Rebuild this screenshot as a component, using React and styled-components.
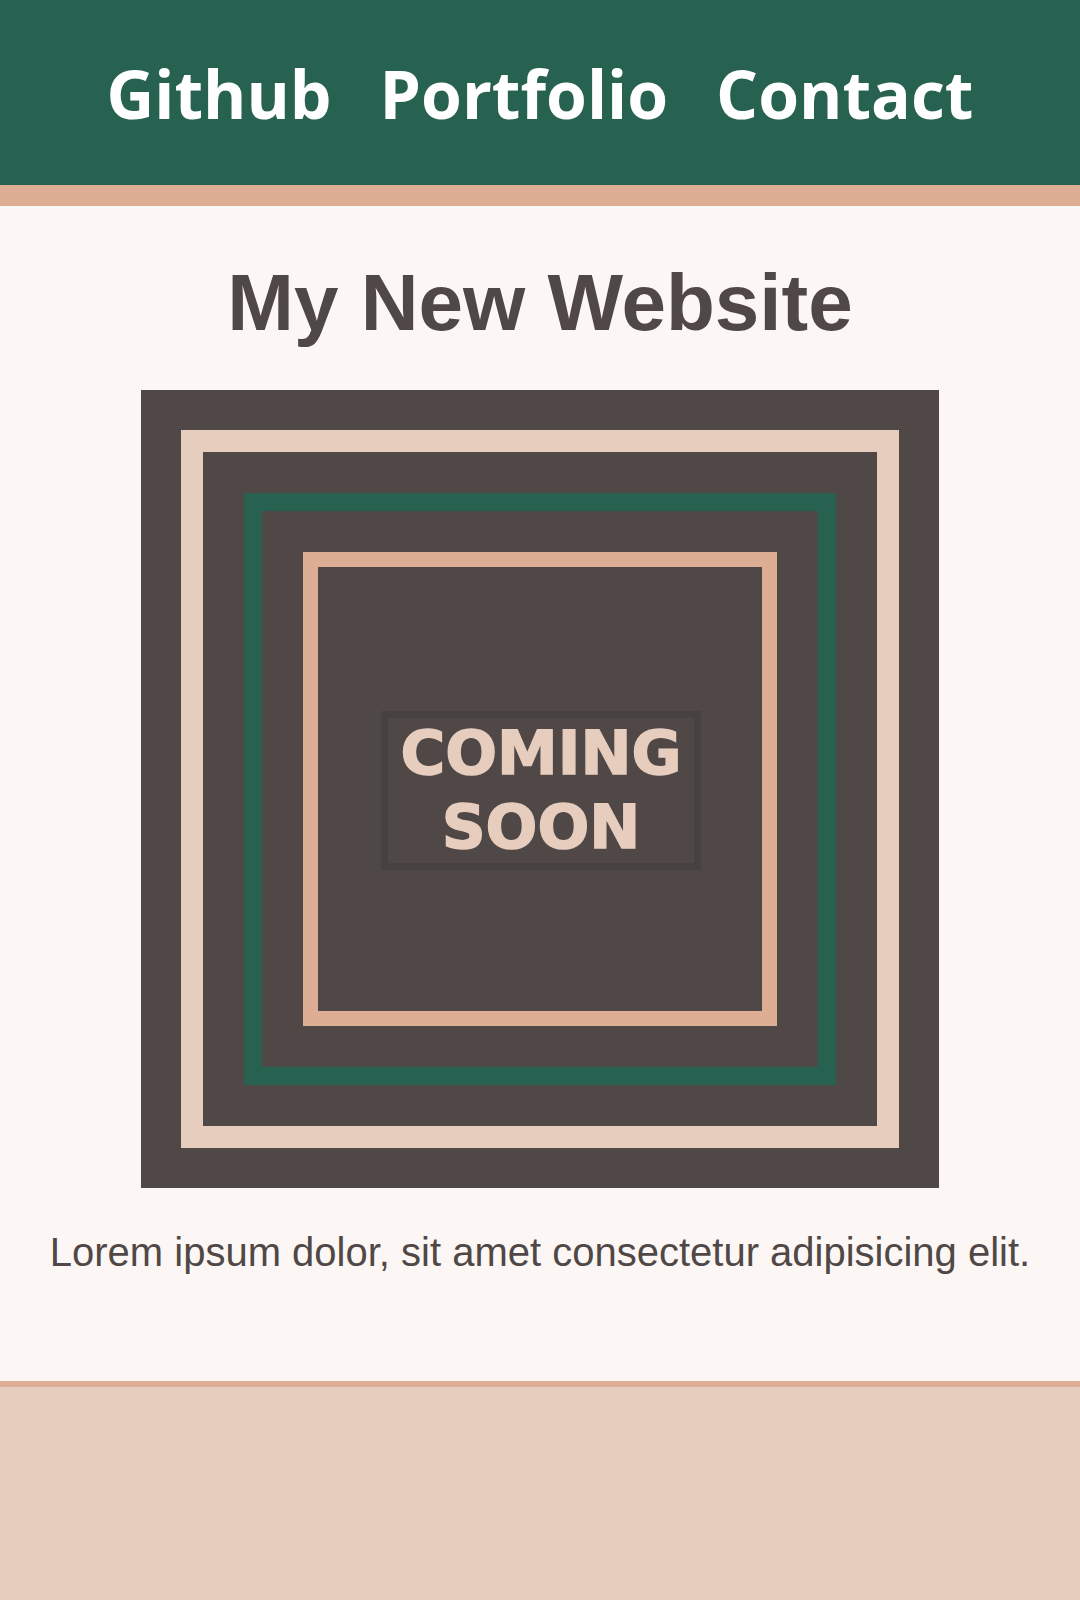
import React from "react";
import styled, { createGlobalStyle } from "styled-components";

const Global = createGlobalStyle`
  html, body { margin: 0; padding: 0; }
  body { background: #e7cdbe; font-family: "Liberation Sans", Arial, sans-serif; }
  * { box-sizing: border-box; }
`;

const Header = styled.header`
  height: 206px;
  background: #27614f;
  border-bottom: 21px solid #ddae94;
  display: flex;
  align-items: center;
  justify-content: center;
`;

const Nav = styled.nav`
  display: flex;
  gap: 48px;
  align-items: center;
  justify-content: center;
`;

const NavLink = styled.a`
  color: #ffffff;
  text-decoration: none;
  font-family: "Open Sans", "Noto Sans", sans-serif;
  font-weight: 700;
  font-size: 66px;
  line-height: 1;
`;

const Main = styled.main`
  background: #fcf7f4;
  display: flex;
  flex-direction: column;
  align-items: center;
  padding: 51px 0 106px;
`;

const Title = styled.h1`
  margin: 0 0 41px;
  color: #504846;
  font-family: "Liberation Sans", Arial, sans-serif;
  font-weight: 700;
  font-size: 80px;
  line-height: 92px;
`;

const Frame = styled.div`
  width: 798px;
  height: 798px;
  background: #504846;
  padding: 40px;
  display: flex;
`;

const Ring = styled.div`
  flex: 1;
  display: flex;
  border: ${(p) => p.$w}px solid ${(p) => p.$c};
  padding: ${(p) => p.$pad}px;
`;

const Inner = styled.div`
  flex: 1;
  display: flex;
  align-items: center;
  justify-content: center;
  border: 15px solid #ddae94;
  padding-top: 2px;
  padding-left: 2px;
`;

const Badge = styled.div`
  width: 320px;
  height: 159px;
  border: 7px solid #45423f;
  display: flex;
  flex-direction: column;
  align-items: center;
  justify-content: center;
  color: #e7cdbe;
  font-family: "DejaVu Sans", sans-serif;
  font-weight: 700;
  font-size: 61px;
  line-height: 74px;
  text-align: center;
  -webkit-text-stroke: 1.5px #e7cdbe;
`;

const Lead = styled.p`
  margin: 41px 0 0;
  color: #504846;
  font-family: "Liberation Sans", Arial, sans-serif;
  font-size: 40px;
  line-height: 46px;
`;

const Footer = styled.footer`
  height: 220px;
  background: #e7cdbe;
  border-top: 6px solid #ddae94;
`;

export default function App() {
  return (
    <>
      <Global />
      <Header>
        <Nav>
          <NavLink href="#">Github</NavLink>
          <NavLink href="#">Portfolio</NavLink>
          <NavLink href="#">Contact</NavLink>
        </Nav>
      </Header>
      <Main>
        <Title>My New Website</Title>
        <Frame>
          <Ring $w={22} $c="#e7cdbe" $pad={41}>
            <Ring $w={18} $c="#27614f" $pad={41}>
              <Inner>
                <Badge>
                  <span>COMING</span>
                  <span>SOON</span>
                </Badge>
              </Inner>
            </Ring>
          </Ring>
        </Frame>
        <Lead>Lorem ipsum dolor, sit amet consectetur adipisicing elit.</Lead>
      </Main>
      <Footer />
    </>
  );
}
